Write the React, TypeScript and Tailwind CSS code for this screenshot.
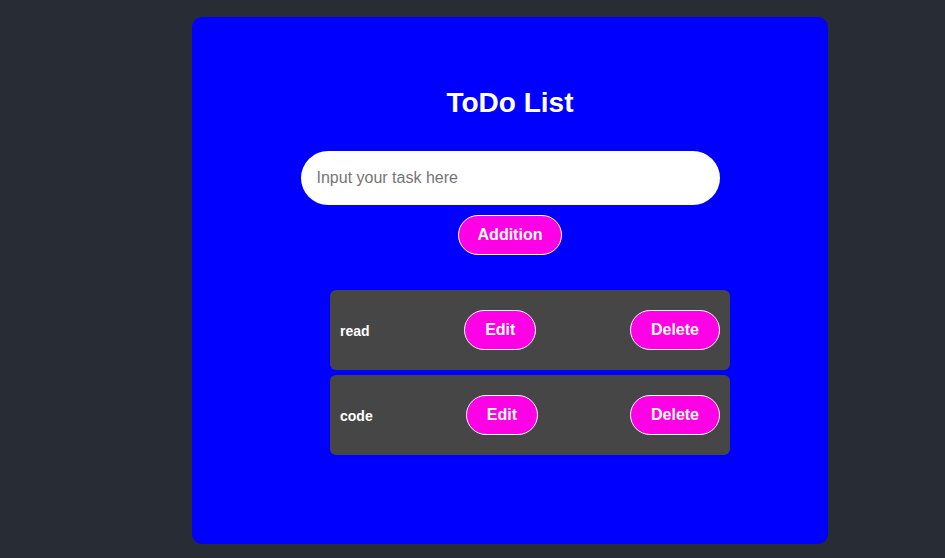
import { useState } from "react";

const tasks = ["read", "code"];

export default function App() {
  const [value, setValue] = useState("");

  return (
    <div className="min-h-[558px] bg-[#282c34] pl-[192px] pt-[17px] pb-[14px] font-['Liberation_Sans',Arial,sans-serif]">
      <div className="w-[636px] h-[527px] bg-[#0000ff] rounded-[10px] flex flex-col items-center pt-[70px]">
        <h1 className="text-[28px] leading-[32px] font-bold text-white">ToDo List</h1>

        <input
          type="text"
          value={value}
          onChange={(e) => setValue(e.target.value)}
          placeholder="Input your task here"
          className="mt-[32px] w-[419px] h-[54px] rounded-full bg-white pl-[16px] text-[16px] text-black outline-none placeholder:text-[#757575]"
        />

        <button className="mt-[10px] h-[40px] px-[19px] rounded-full bg-[#ff00e6] border border-white text-white text-[16px] font-bold">
          Addition
        </button>

        <div className="mt-[35px] ml-[40px] w-[400px] flex flex-col gap-[5px]">
          {tasks.map((t) => (
            <div key={t} className="flex items-center justify-between h-[80px] bg-[#464646] rounded-[6px] px-[10px]">
              <span className="pt-[3px] text-[14px] font-bold text-white">{t}</span>
              <button className="ml-[1px] h-[40px] w-[72px] rounded-full bg-[#ff00e6] border border-white text-white text-[16px] font-bold">
                Edit
              </button>
              <button className="h-[40px] w-[90px] rounded-full bg-[#ff00e6] border border-white text-white text-[16px] font-bold">
                Delete
              </button>
            </div>
          ))}
        </div>
      </div>
    </div>
  );
}
